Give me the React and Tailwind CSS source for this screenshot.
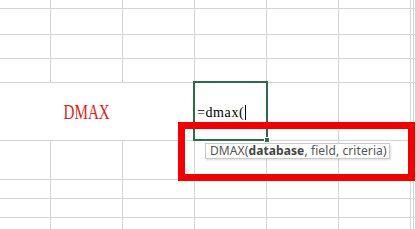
import React from "react";

const line = "border-[#d4d4d4]";

export default function App() {
  const cols = "grid-cols-[51px_72px_72px_72px_72px_72px_3px_1fr]";
  const rows = "grid-rows-[9px_26px_24px_24px_58px_39px_19px_19px_12px]";
  const cell = `border-r border-b ${line}`;
  const cellsFor = (r) =>
    [0, 1, 2, 3, 4, 5, 6, 7].map((c) => (
      <div key={`${r}-${c}`} className={cell} />
    ));
  return (
    <div className="relative w-[416px] h-[229px] overflow-hidden bg-white">
      <div className={`grid ${cols} ${rows} w-[416px] h-[229px]`}>
        {cellsFor(0)}
        {cellsFor(1)}
        {cellsFor(2)}
        {cellsFor(3)}
        {/* tall row */}
        <div className={`border-b ${line}`} />
        <div className={`border-b ${line} flex items-center justify-center`}>
          <span
            className="inline-block text-[22px] leading-none text-[#d81e1e] scale-x-[0.69] pt-[1px]"
            style={{ fontFamily: '"Liberation Serif", "Times New Roman", serif' }}
          >
            DMAX
          </span>
        </div>
        <div className={cell} />
        <div className={`${cell} flex items-center pl-[2px] pt-[2px]`}>
          <span
            className="text-[14px] leading-none text-black tracking-[0.6px]"
            style={{ fontFamily: '"Liberation Serif", "Times New Roman", serif' }}
          >
            =dmax(
          </span>
          <span className="ml-[1px] w-px h-[15px] bg-black" />
        </div>
        <div className={cell} />
        <div className={cell} />
        <div className={cell} />
        <div className={cell} />
        {cellsFor(5)}
        {cellsFor(6)}
        {cellsFor(7)}
        {cellsFor(8)}
      </div>

      {/* active cell border */}
      <div className="absolute left-[193px] top-[81px] w-[75px] h-[60px] border-2 border-[#2f6b48]" />
      <div className="absolute left-[264px] top-[137px] w-[6px] h-[6px] bg-[#2f6b48] border border-white" />

      {/* red highlight box */}
      <div className="absolute left-[178px] top-[122px] w-[237px] h-[59px] border-[7px] border-[#f20000]" />

      {/* tooltip */}
      <div
        className="absolute left-[205px] top-[143px] w-[185px] h-[16px] bg-white border border-[#c9c9c9] shadow-[1px_1px_2px_rgba(0,0,0,0.15)] flex items-center pl-[4px] text-[12px] tracking-[0.1px] leading-none text-[#555] whitespace-nowrap"
        style={{ fontFamily: '"Noto Sans", "Open Sans", sans-serif' }}
      >
        DMAX(<span className="font-bold text-[#444]">database</span>, field, criteria)
      </div>
    </div>
  );
}
